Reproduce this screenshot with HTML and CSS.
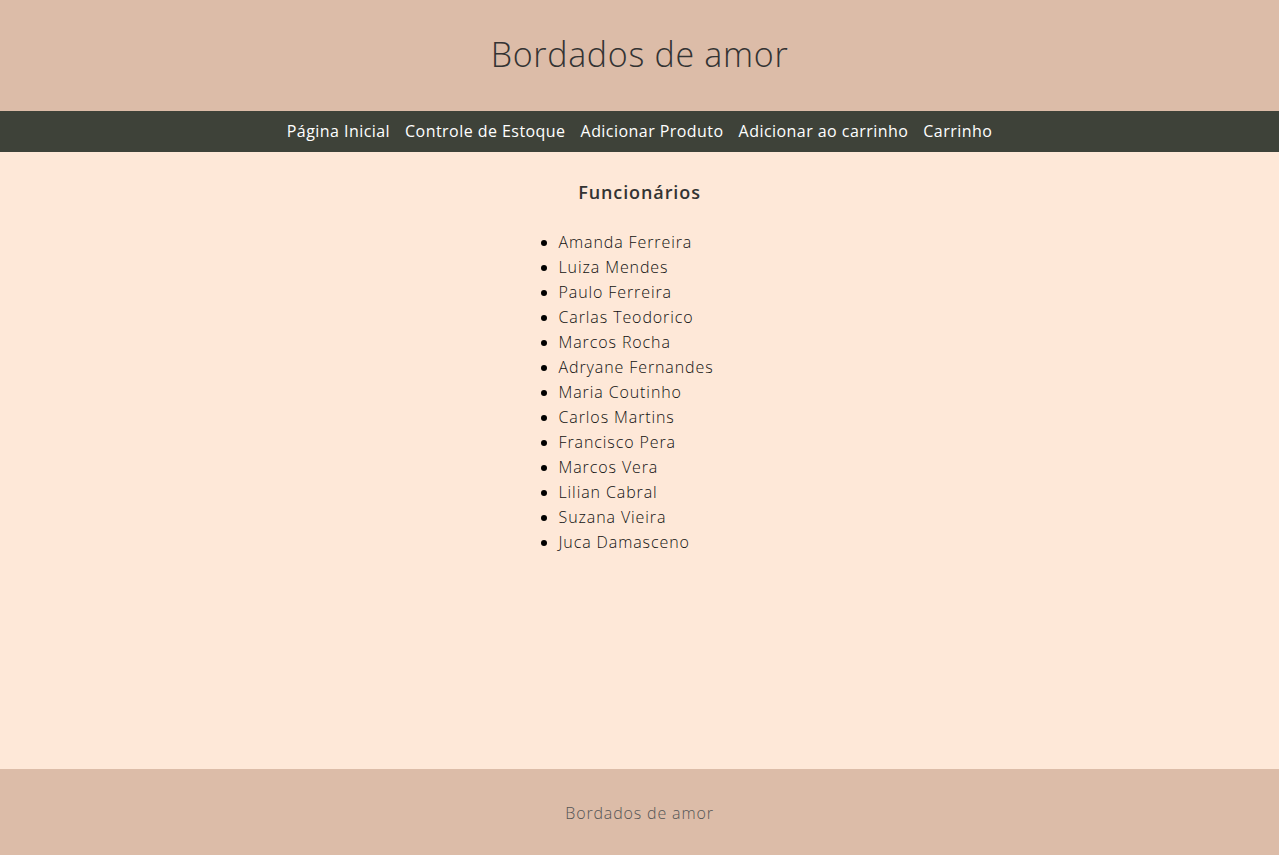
FILE: index.html
```html
<!DOCTYPE html>
<html lang="pt-BR">
<head>
<meta charset="utf-8">
<title>Bordados de amor</title>
<link rel="stylesheet" href="styles.css">
</head>
<body>
<div class="page">
  <header class="site-header">
    <h1 class="site-title">Bordados de amor</h1>
  </header>
  <nav class="site-nav">
    <a href="#">Página Inicial</a>
    <a href="#">Controle de Estoque</a>
    <a href="#">Adicionar Produto</a>
    <a href="#">Adicionar ao carrinho</a>
    <a href="#">Carrinho</a>
  </nav>
  <main class="content">
    <h2 class="section-title">Funcionários</h2>
    <ul class="staff-list">
      <li>Amanda Ferreira</li>
      <li>Luiza Mendes</li>
      <li>Paulo Ferreira</li>
      <li>Carlas Teodorico</li>
      <li>Marcos Rocha</li>
      <li>Adryane Fernandes</li>
      <li>Maria Coutinho</li>
      <li>Carlos Martins</li>
      <li>Francisco Pera</li>
      <li>Marcos Vera</li>
      <li>Lilian Cabral</li>
      <li>Suzana Vieira</li>
      <li>Juca Damasceno</li>
    </ul>
  </main>
  <footer class="site-footer">
    <p>Bordados de amor</p>
  </footer>
</div>
</body>
</html>
```

FILE: styles.css
```css
* { box-sizing: border-box; }
html, body { margin: 0; padding: 0; }
body {
  font-family: "Open Sans", "Noto Sans", sans-serif;
  background: #fee8d8;
  color: #2b2b2b;
}
.page {
  min-height: 855px;
  display: flex;
  flex-direction: column;
}
.site-header {
  background: #dcbca8;
  height: 111px;
  display: flex;
  align-items: center;
  justify-content: center;
  padding-bottom: 3px;
}
.site-title {
  margin: 0;
  font-size: 34px;
  font-weight: 300;
  color: #333;
  letter-spacing: 0.7px;
}
.site-nav {
  background: #3e4239;
  height: 41px;
  display: flex;
  align-items: center;
  justify-content: center;
  gap: 15px;
  padding-bottom: 1px;
}
.site-nav a {
  color: #fff;
  text-decoration: none;
  font-size: 16px;
  letter-spacing: 0.45px;
}
.content {
  flex: 1;
  display: flex;
  flex-direction: column;
  align-items: center;
  padding-top: 28px;
}
.section-title {
  margin: 0;
  font-size: 18px;
  font-weight: 600;
  color: #333;
  line-height: 24px;
  letter-spacing: 0.9px;
}
.staff-list {
  width: 242px;
  margin: 26px 0 0 0;
  padding-left: 40px;
  font-size: 16px;
  line-height: 25px;
  color: #111;
  font-weight: 300;
  letter-spacing: 0.9px;
}
.staff-list li::marker {
  color: #000;
}
.site-footer {
  background: #dcbca8;
  height: 86px;
  display: flex;
  align-items: center;
  justify-content: center;
  padding-top: 2px;
}
.site-footer p {
  margin: 0;
  font-size: 16px;
  font-weight: 300;
  color: #555;
  letter-spacing: 0.85px;
}
```
